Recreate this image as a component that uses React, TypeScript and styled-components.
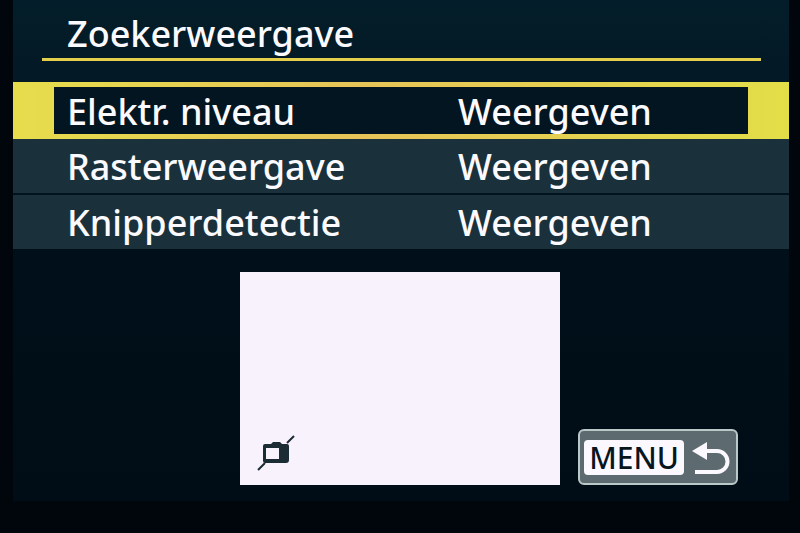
import React from "react";
import styled, { createGlobalStyle } from "styled-components";

const GlobalStyle = createGlobalStyle`
  * { box-sizing: border-box; }
  body {
    margin: 0;
    background: #00060b;
    color: #fbfaff;
    font-family: "Noto Sans", sans-serif;
  }
  button { font: inherit; color: inherit; }
`;

const Display = styled.main`
  min-height: 100vh;
  padding: 0 11px 32px 13px;
  display: flex;
`;

const Screen = styled.div`
  flex: 1;
  min-width: 0;
  display: flex;
  flex-direction: column;
  background: linear-gradient(#031e2a 0, #031925 80px, #000f19 260px, #000d17 100%);
`;

const Header = styled.header`
  height: 61px;
  margin: 0 28px 21px 29px;
  padding: 9px 0 0 25px;
  border-bottom: 3px solid #e3cf4b;
`;

const Title = styled.h1`
  margin: 0;
  font-size: 36px;
  line-height: 50px;
  font-weight: 500;
`;

const Settings = styled.ul`
  list-style: none;
  margin: 0;
  padding: 0;
  display: flex;
  flex-direction: column;
`;

const SettingItem = styled.li`
  & + & + & { margin-top: 2px; }
`;

const SettingButton = styled.button<{ $selected?: boolean }>`
  display: grid;
  grid-template-columns: 13fr 11fr;
  align-items: center;
  width: 100%;
  height: ${(p) => (p.$selected ? "57px" : "54px")};
  padding: 2px 0 0 54px;
  border: 0;
  text-align: left;
  font-size: 36px;
  line-height: 46px;
  font-weight: 500;
  background: ${(p) =>
    p.$selected
      ? "linear-gradient(#031520, #031520) 41px 5px / calc(100% - 82px) calc(100% - 10px) no-repeat, linear-gradient(90deg, #e6dd4c, #e7c458 45%, #e3de48)"
      : "#1a313b"};
`;

const Footer = styled.footer`
  display: grid;
  grid-template-columns: 1fr 320px 1fr;
  align-items: end;
  margin: 23px 3px 0 0;
`;

const Preview = styled.figure`
  grid-column: 2;
  margin: 0;
  aspect-ratio: 3 / 2;
  display: flex;
  align-items: flex-end;
  padding: 0 0 12px 16px;
  background: #f7f2fb;
`;

const MenuButton = styled.button`
  justify-self: end;
  display: flex;
  align-items: center;
  gap: 8px;
  width: 160px;
  height: 56px;
  margin-right: 48px;
  padding: 0 4px;
  border: 2px solid #b8c9c8;
  border-radius: 6px;
  background: #5d6b70;
`;

const MenuLabel = styled.span`
  flex: none;
  width: 100px;
  height: 35px;
  border-radius: 4px;
  background: #fbf8ff;
  color: #07151c;
  font-size: 30px;
  line-height: 35px;
  font-weight: 500;
  text-align: center;
`;

const settings = [
  { label: "Elektr. niveau", value: "Weergeven", selected: true },
  { label: "Rasterweergave", value: "Weergeven", selected: false },
  { label: "Knipperdetectie", value: "Weergeven", selected: false },
];

function CameraLevelIcon() {
  return (
    <svg width="40" height="38" viewBox="0 0 40 38" aria-hidden="true">
      <path d="M2 35 9 28M31 8l7-7" stroke="#1c2c35" strokeWidth="2" />
      <path
        fill="#1c2c35"
        fillRule="evenodd"
        d="M9 9h6l2-2h7l2 2h5q2 0 2 2v14q0 3-3 3H9q-2 0-2-2V11q0-2 2-2ZM10 13v11h13V13Z"
      />
    </svg>
  );
}

function ReturnIcon() {
  return (
    <svg width="40" height="34" viewBox="0 0 40 34" aria-hidden="true">
      <path d="M0 11 15 2v18Z" fill="#fbf8ff" />
      <path d="M13 11h12a10.5 10.5 0 0 1 0 21H3" fill="none" stroke="#fbf8ff" strokeWidth="4" />
    </svg>
  );
}

export default function App() {
  return (
    <>
      <GlobalStyle />
      <Display lang="nl">
        <Screen>
          <Header>
            <Title>Zoekerweergave</Title>
          </Header>
          <Settings>
            {settings.map((s) => (
              <SettingItem key={s.label}>
                <SettingButton type="button" $selected={s.selected} aria-pressed={s.selected}>
                  <span>{s.label}</span>
                  <span>{s.value}</span>
                </SettingButton>
              </SettingItem>
            ))}
          </Settings>
          <Footer>
            <Preview>
              <CameraLevelIcon />
            </Preview>
            <MenuButton type="button">
              <MenuLabel>MENU</MenuLabel>
              <ReturnIcon />
            </MenuButton>
          </Footer>
        </Screen>
      </Display>
    </>
  );
}
